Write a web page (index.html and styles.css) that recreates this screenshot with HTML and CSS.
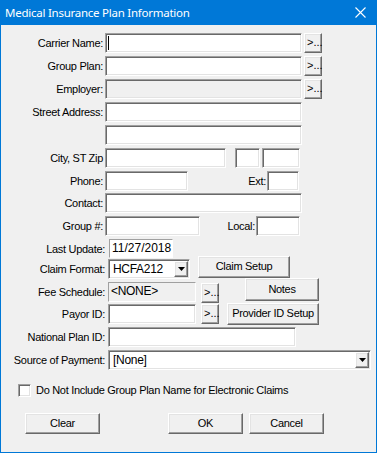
FILE: index.html
```html
<!DOCTYPE html>
<html lang="en">
<head>
  <meta charset="UTF-8" />
  <title>Medical Insurance Plan Information</title>
  <link rel="stylesheet" href="styles.css">
</head>
<body>
  <div class="window">
    <div class="titlebar">
      <span class="title">Medical Insurance Plan Information</span>
      <svg class="close" width="11" height="11" viewBox="0 0 11 11"><path d="M0.5 0.5L10.5 10.5M10.5 0.5L0.5 10.5" stroke="#fff" stroke-width="1.1" fill="none"/></svg>
    </div>

    <div class="client">
      <div class="row">
        <div class="lbl">Carrier Name:</div>
        <div class="edit edit-long"><span class="caret"></span></div>
        <div class="btn dots">&gt;...</div>
      </div>
      <div class="row">
        <div class="lbl">Group Plan:</div>
        <div class="edit edit-long"></div>
        <div class="btn dots">&gt;...</div>
      </div>
      <div class="row">
        <div class="lbl">Employer:</div>
        <div class="edit edit-long disabled"></div>
        <div class="btn dots">&gt;...</div>
      </div>
      <div class="row">
        <div class="lbl">Street Address:</div>
        <div class="edit edit-long"></div>
      </div>
      <div class="row">
        <div class="lbl"></div>
        <div class="edit edit-long"></div>
      </div>
      <div class="row">
        <div class="lbl">City, ST Zip</div>
        <div class="edit edit-city"></div>
        <div class="edit edit-st"></div>
        <div class="edit edit-zip"></div>
      </div>
      <div class="row row-short">
        <div class="lbl">Phone:</div>
        <div class="edit edit-phone"></div>
        <div class="lbl lbl-ext">Ext:</div>
        <div class="edit edit-ext"></div>
      </div>
      <div class="row">
        <div class="lbl">Contact:</div>
        <div class="edit edit-long"></div>
      </div>
      <div class="row">
        <div class="lbl">Group #:</div>
        <div class="edit edit-group"></div>
        <div class="lbl lbl-local">Local:</div>
        <div class="edit edit-local"></div>
      </div>
      <div class="row row-update">
        <div class="lbl lbl-wide">Last Update:</div>
        <div class="flat edit-date">11/27/2018</div>
      </div>

      <div class="row">
        <div class="lbl lbl-wide">Claim Format:</div>
        <div class="edit combo combo-claim"><span class="value">HCFA212</span><span class="drop"><svg width="7" height="4" viewBox="0 0 7 4"><path d="M0 0H7L3.5 4Z" fill="#000"/></svg></span></div>
        <div class="btn btn-setup">Claim Setup</div>
      </div>
      <div class="row row-fee">
        <div class="lbl lbl-wide">Fee Schedule:</div>
        <div class="flat disabled edit-fee">&lt;NONE&gt;</div>
        <div class="btn dots dots-fee">&gt;...</div>
        <div class="btn btn-notes">Notes</div>
      </div>
      <div class="row">
        <div class="lbl lbl-wide">Payor ID:</div>
        <div class="edit edit-payor"></div>
        <div class="btn dots dots-payor">&gt;...</div>
        <div class="btn btn-provider">Provider ID Setup</div>
      </div>
      <div class="row">
        <div class="lbl lbl-wide">National Plan ID:</div>
        <div class="edit edit-npi"></div>
      </div>
      <div class="row row-source">
        <div class="lbl lbl-wide">Source of Payment:</div>
        <div class="edit combo combo-source"><span class="value">[None]</span><span class="drop"><svg width="7" height="4" viewBox="0 0 7 4"><path d="M0 0H7L3.5 4Z" fill="#000"/></svg></span></div>
      </div>

      <div class="check-row">
        <span class="checkbox"></span>
        <span class="check-text">Do Not Include Group Plan Name for Electronic Claims</span>
      </div>

      <div class="actions">
        <div class="btn btn-action btn-clear">Clear</div>
        <div class="btn btn-action btn-ok">OK</div>
        <div class="btn btn-action btn-cancel">Cancel</div>
      </div>
    </div>
  </div>
</body>
</html>
```

FILE: styles.css
```css
body { margin: 0; font-family: "Liberation Sans", Arial, sans-serif; font-size: 11px; color: #000; }
.window { width: 377px; height: 453px; box-sizing: border-box; border: 1px solid #0078d7; border-top: none; background: #f0f0f0; }
.titlebar { height: 25px; background: #0078d7; display: flex; align-items: center; justify-content: space-between; padding: 0 10px 0 4px; }
.title { color: #fff; font-family: "Noto Sans", "Open Sans", sans-serif; font-size: 11.5px; letter-spacing: -0.25px; }
.close { display: block; }

.client { padding-top: 8px; letter-spacing: -0.3px; }
.row { display: flex; align-items: flex-start; height: 23px; }
.row-short { height: 22px; }
.row-update { height: 20px; }
.row-fee { height: 22px; }
.row-source { height: 34px; }

.lbl { width: 102px; margin-right: 2px; text-align: right; line-height: 20px; white-space: nowrap; flex-shrink: 0; }
.lbl-wide { width: 104px; margin-right: 3px; }
.lbl-ext { width: 78px; margin-right: 1px; }
.lbl-local { width: 55px; margin-right: 1px; }

.edit { height: 20px; box-sizing: border-box; background: #fff; border: 1px solid; border-color: #a0a0a0 #fff #fff #a0a0a0; box-shadow: inset 1px 1px 0 #696969, inset -1px -1px 0 #e3e3e3; position: relative; flex-shrink: 0; }
.flat { height: 19px; box-sizing: border-box; background: #fff; border: 1px solid; border-color: #a0a0a0 #fff #fff #a0a0a0; font-size: 12px; line-height: 17px; padding-left: 2px; flex-shrink: 0; }
.disabled { background: #f0f0f0; }
.caret { position: absolute; left: 2px; top: 2px; width: 1px; height: 14px; background: #000; }

.edit-long { width: 197px; }
.edit-city { width: 121px; }
.edit-st { width: 25px; margin-left: 9px; }
.edit-zip { width: 38px; margin-left: 2px; }
.edit-phone { width: 83px; }
.edit-ext { width: 32px; }
.edit-group { width: 95px; }
.edit-local { width: 44px; }
.edit-date { width: 64px; margin-left: 1px; letter-spacing: 0; }
.edit-fee { width: 88px; height: 20px; }
.edit-payor { width: 88px; }
.edit-npi { width: 188px; }

.combo { display: flex; align-items: center; justify-content: space-between; font-size: 12px; padding: 0 1px 0 4px; }
.combo-claim { width: 82px; }
.combo-source { width: 263px; }
.drop { width: 14px; height: 16px; box-sizing: border-box; background: #f0f0f0; border: 1px solid; border-color: #fff #696969 #696969 #fff; box-shadow: inset -1px -1px 0 #a0a0a0, inset 1px 1px 0 #e3e3e3; display: flex; align-items: center; justify-content: center; }
.drop svg { display: block; }

.btn { box-sizing: border-box; background: #f0f0f0; border: 1px solid; border-color: #fff #696969 #696969 #fff; box-shadow: inset -1px -1px 0 #a0a0a0, inset 1px 1px 0 #e3e3e3; text-align: center; flex-shrink: 0; }
.dots { width: 18px; height: 20px; margin-left: 2px; text-align: left; padding-left: 2px; line-height: 17px; letter-spacing: 0; }
.dots-fee { margin-left: 5px; margin-top: 1px; }
.dots-payor { margin-left: 5px; }
.btn-setup { width: 92px; height: 22px; margin-left: 8px; margin-top: -3px; line-height: 19px; }
.btn-notes { width: 74px; height: 23px; margin-left: 26px; margin-top: -4px; line-height: 20px; }
.btn-provider { width: 92px; height: 22px; margin-left: 8px; margin-top: -1px; line-height: 19px; }

.check-row { display: flex; align-items: flex-start; height: 29px; }
.checkbox { width: 13px; height: 13px; box-sizing: border-box; margin-left: 17px; background: #fff; border: 1px solid; border-color: #a0a0a0 #fff #fff #a0a0a0; box-shadow: inset 1px 1px 0 #696969, inset -1px -1px 0 #e3e3e3; }
.check-text { margin-left: 5px; line-height: 13px; }

.actions { display: flex; }
.btn-action { width: 75px; height: 21px; line-height: 18px; }
.btn-clear { margin-left: 24px; }
.btn-ok { margin-left: 68px; }
.btn-cancel { margin-left: 6px; }
```
